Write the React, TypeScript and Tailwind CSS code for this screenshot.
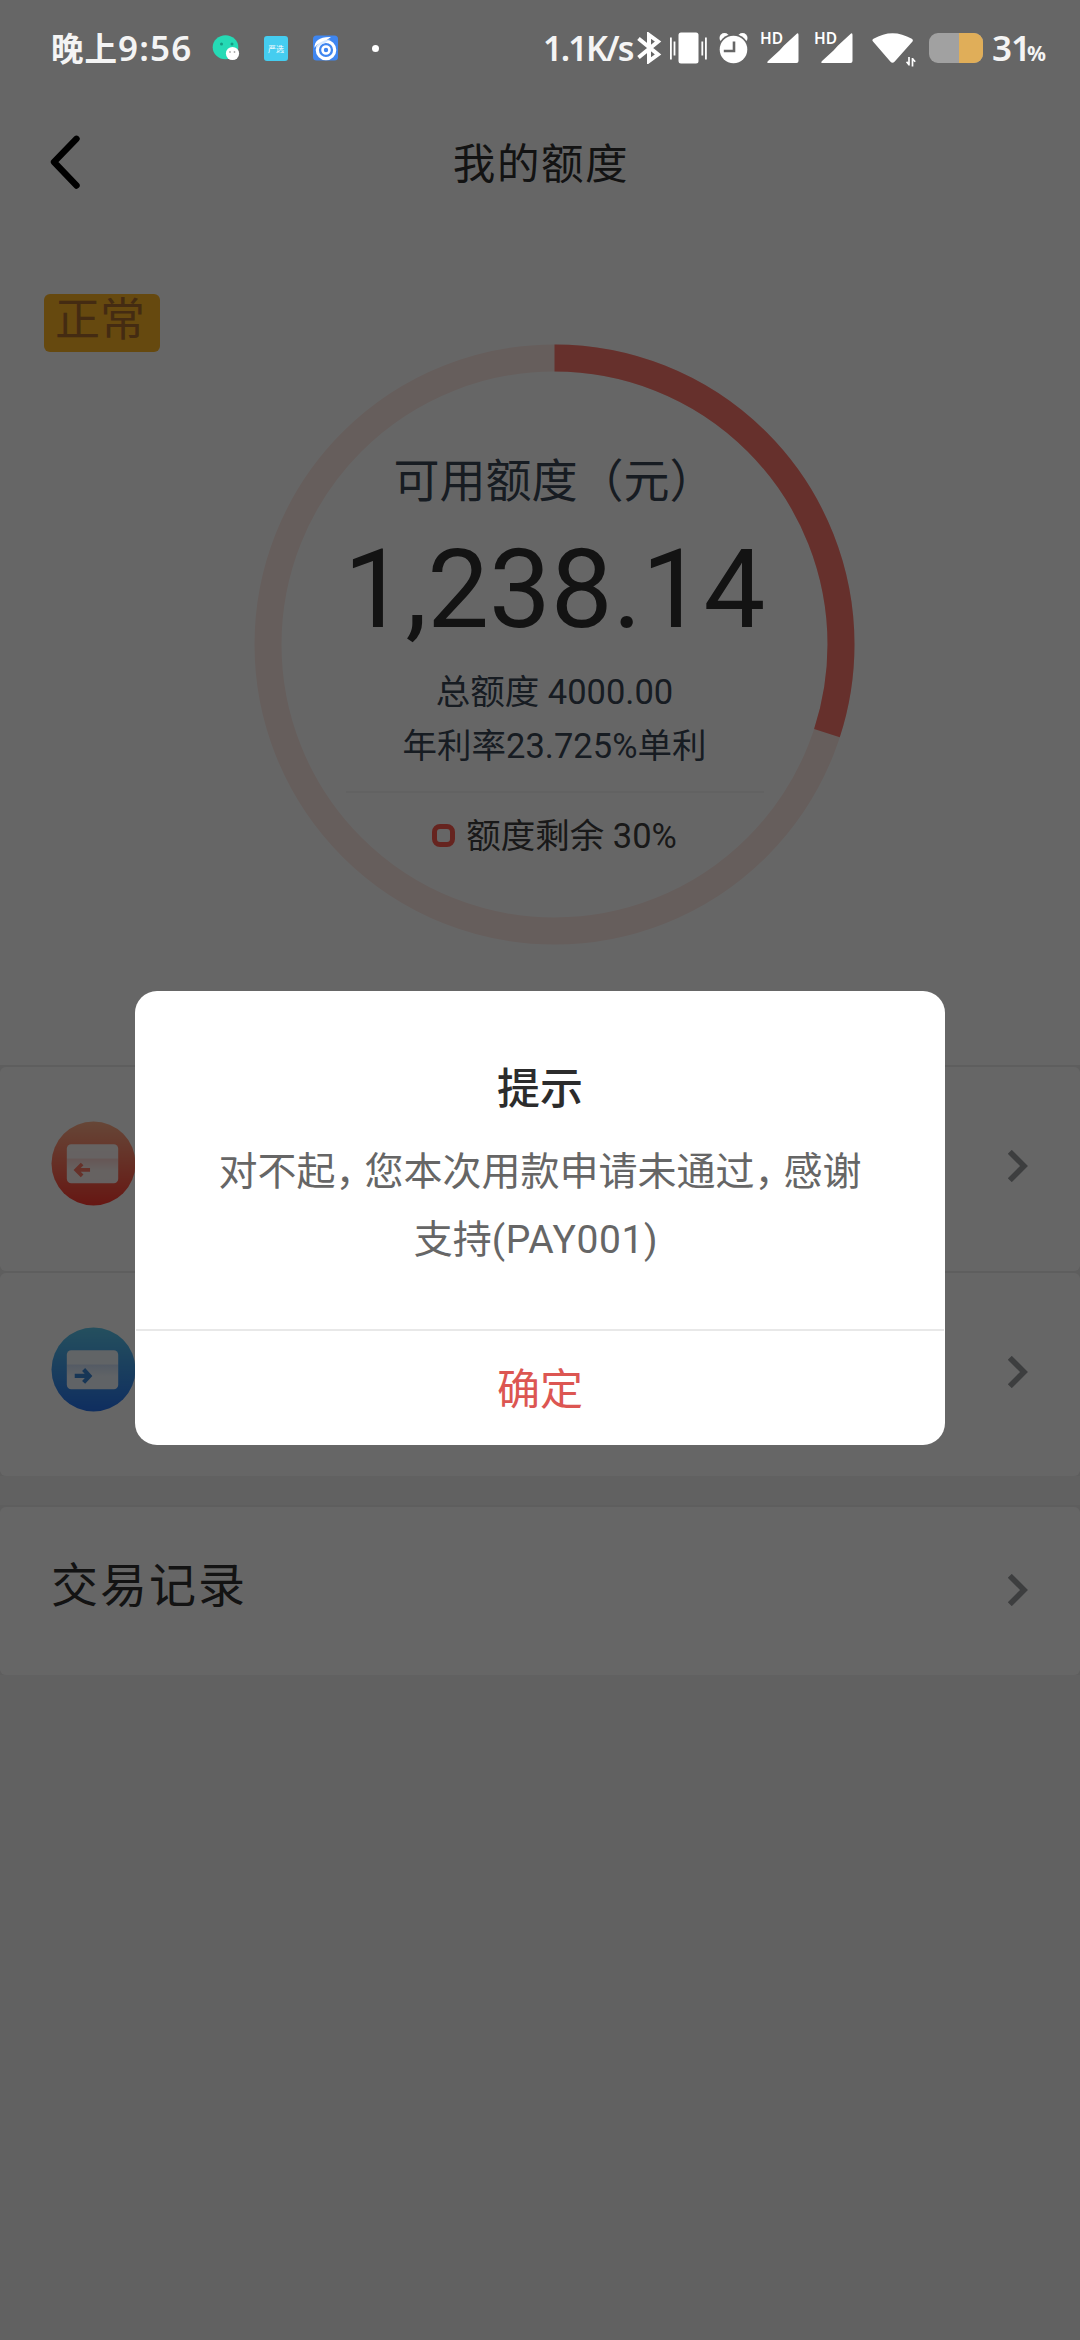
import type { ReactNode } from "react";

const RING_RADIUS = 286.5
const RING_LENGTH = 2 * Math.PI * RING_RADIUS

function SignalIcon() {
    return (
        <svg width="38" height="32" viewBox="0 0 38 32" className="shrink-0 overflow-visible">
            <text x="-1" y="11.6" fontSize="15.5" fontWeight="600" fill="#fff" fontFamily="Noto Sans, sans-serif">
                HD
            </text>
            <path d="M36 1.5 Q37.5 0.5 37.5 3 V29 Q37.5 31 35.5 31 H8 Q5 31 7 29 L18.5 18.5 L23 13.5 Z" fill="#fff" />
        </svg>
    )
}

function StatusBar() {
    return (
        <div className="absolute inset-x-0 top-0 z-20 h-24 flex items-center pl-[51px] text-[#f4f4f4]">
            {/* Left: time and notification icons */}
            <div className="w-[161px] flex items-baseline whitespace-nowrap font-['Noto_Sans','Noto_Sans_CJK_SC',sans-serif] font-semibold leading-none">
                <span className="text-[32.5px] tracking-[1px]">晚上</span>
                <span className="text-[35px] tracking-[1.2px]">9:56</span>
            </div>
            <svg width="28" height="26" viewBox="0 0 28 26" className="shrink-0">
                <ellipse cx="13.5" cy="12.3" rx="12.8" ry="12" fill="#25dab5" />
                <circle cx="9.5" cy="9" r="1.5" fill="#159c84" />
                <circle cx="20" cy="9" r="1.5" fill="#159c84" />
                <circle cx="20.5" cy="18.5" r="6.6" fill="#fff" />
                <circle cx="18" cy="17" r="0.9" fill="#aaa" />
                <circle cx="22.5" cy="17" r="0.9" fill="#aaa" />
            </svg>
            <div className="ml-6 w-6 h-[25px] rounded-[3px] bg-[#45cdf0] text-white text-[8px] leading-[25px] text-center whitespace-nowrap font-['Noto_Sans_CJK_SC',sans-serif]">
                严选
            </div>
            <svg width="25" height="26" viewBox="0 0 25 26" className="ml-[25px] shrink-0">
                <rect width="25" height="25" y="0.5" rx="3.5" fill="#3f86f0" />
                <circle cx="13" cy="15" r="8.7" fill="none" stroke="#fff" strokeWidth="3.2" />
                <circle cx="13" cy="15" r="3.5" fill="none" stroke="#fff" strokeWidth="2.6" />
                <path d="M1.5 13 C1 6 7 1.5 18 2 L13 5.5 C8 6 4 9 1.5 13 Z" fill="#fff" />
                <path d="M3 14 C4 8 10 5 17 4.5 L12 8 C8 9 5 11 3 14 Z" fill="#d4e8ff" />
            </svg>
            <div className="ml-[34px] w-[7px] h-[7px] rounded-full bg-white" />

            {/* Right: system indicators */}
            <div className="ml-[164px] w-[94px] shrink-0 whitespace-nowrap text-[34px] leading-none tracking-[-1.8px] font-semibold font-['Noto_Sans',sans-serif]">
                1.1K/s
            </div>
            <svg width="25" height="32" viewBox="0 0 25 32" className="shrink-0 -mt-px" fill="none" stroke="#fff" strokeWidth="4">
                <path d="M1.5 6.5 L21 22.5 L12 29 V3 L21 9.5 L1.5 25.5" />
            </svg>
            <svg width="37" height="32" viewBox="0 0 37 32" className="ml-2 shrink-0" fill="#fff">
                <rect x="8.5" y="0.5" width="20" height="31" rx="2.5" />
                <rect x="0" y="5.5" width="1.8" height="22" />
                <rect x="3.6" y="9.5" width="1.8" height="14" />
                <rect x="31.4" y="9.5" width="1.8" height="14" />
                <rect x="35" y="5.5" width="1.8" height="22" />
            </svg>
            <svg width="29" height="32" viewBox="0 0 29 32" className="ml-3 shrink-0">
                <circle cx="5.5" cy="6" r="5" fill="#fff" />
                <circle cx="23.5" cy="6" r="5" fill="#fff" />
                <circle cx="14.5" cy="17.5" r="15.4" fill="#666" />
                <circle cx="14.5" cy="17.5" r="13.8" fill="#fff" />
                <path d="M15 9.5 V19 H4.8" fill="none" stroke="#666" strokeWidth="2.6" />
            </svg>
            <div className="ml-[13px] flex gap-4">
                <SignalIcon />
                <SignalIcon />
            </div>
            <svg width="45" height="36" viewBox="0 0 45 36" className="ml-[19px] mt-[3px] shrink-0" fill="#fff">
                <path d="M1 9.5 Q-0.5 8 1.5 6.8 Q20.5 -4.5 39.8 6.8 Q41.5 8 40.5 9.5 L22.5 29.8 Q20.5 31.8 18.5 29.8 Z" />
                <path d="M37 25 V33.5 M37.2 33 L34.6 29.8 M40.5 34.5 V26 M40.3 26.5 L43.2 29.8" fill="none" stroke="#fff" strokeWidth="1.7" />
            </svg>
            <div className="ml-[12px] w-[54px] h-[30px] shrink-0 rounded-[9px] overflow-hidden flex bg-[#a1a1a1]">
                <div className="ml-auto w-6 h-full bg-[#e0ae59]" />
            </div>
            <div className="ml-[9px] -mt-px flex items-baseline leading-none font-semibold font-['Noto_Sans',sans-serif]">
                <span className="w-[35px] text-[35px] tracking-[-1px]">31</span>
                <span className="text-[21px] font-bold">%</span>
            </div>
        </div>
    )
}

function RightArrow() {
    return (
        <svg width="20" height="32" viewBox="0 0 20 32" fill="none" stroke="#989b9f" strokeWidth="5.6">
            <path d="M1.8 1.8 L16 16 L1.8 30.2" />
        </svg>
    )
}

function CardIcon({ id, from, to, children }: { id: string; from: string; to: string; children: ReactNode }) {
    return (
        <svg width="85" height="85" viewBox="0 0 86 86" className="mb-[5px]">
            <defs>
                <linearGradient id={id} x1="0" y1="0" x2="0" y2="1">
                    <stop offset="0" stopColor={from} />
                    <stop offset="1" stopColor={to} />
                </linearGradient>
                <linearGradient id={`${id}-stripe`} x1="0" y1="0" x2="0" y2="1">
                    <stop offset="0" stopColor={to} stopOpacity="0.16" />
                    <stop offset="1" stopColor={to} stopOpacity="0" />
                </linearGradient>
            </defs>
            <circle cx="43" cy="43" r="42.5" fill={`url(#${id})`} />
            <rect x="16" y="23.5" width="52" height="39.5" rx="4.5" fill="#fff" fillOpacity="0.93" />
            <rect x="16" y="38" width="52" height="12" fill={`url(#${id}-stripe)`} />
            {children}
        </svg>
    )
}

export default function App() {
    return (
        <div className="relative w-[1080px] h-[2340px] overflow-hidden bg-[#f2f2f2] font-['Roboto','Noto_Sans_CJK_SC',sans-serif]">
            <StatusBar />

            <div className="h-[1065px] bg-white pt-24">
                {/* Header */}
                <div className="h-[132px] grid grid-cols-3 items-center px-[50px]">
                    <svg width="30" height="54" viewBox="0 0 30 54" fill="none" stroke="#000" strokeWidth="6.4" strokeLinecap="round" strokeLinejoin="round">
                        <path d="M26.5 3.8 L4 27 L26.5 50.5" />
                    </svg>
                    <h1 className="pt-[6px] pl-[2px] text-center text-[42.5px] tracking-[1.6px] leading-none text-[#303030]">我的额度</h1>
                </div>

                {/* Quota */}
                <div className="flex pt-[66px] pl-11">
                    <div className="w-[116px] h-[58px] rounded-[6px] bg-[#ffb626] text-[#ab6d2d] text-[45px] leading-[54px] text-center pr-1">
                        正常
                    </div>
                    <div className="relative w-[601px] h-[601px] mt-[50px] ml-[94px]">
                        <svg width="601" height="601" viewBox="0 0 601 601" fill="none" strokeWidth="27" className="absolute inset-0">
                            <circle cx="300.5" cy="300.5" r={RING_RADIUS} stroke="#ffebe6" />
                            <circle
                                cx="300.5"
                                cy="300.5"
                                r={RING_RADIUS}
                                stroke="#ff786f"
                                strokeDasharray={`${RING_LENGTH * 0.3} ${RING_LENGTH}`}
                                transform="rotate(-90 300.5 300.5)"
                            />
                        </svg>
                        <div className="relative flex flex-col items-center pt-[109px] text-[#3a4655] whitespace-nowrap">
                            <p className="text-[46px] leading-[56px]">可用额度（元）</p>
                            <p className="mt-[21px] text-[110px] leading-[120px] text-[#303030]">1,238.14</p>
                            <p className="mt-[15px] text-[34.5px] leading-[54px]">总额度 4000.00</p>
                            <p className="text-[34.5px] leading-[54px]">年利率23.725%单利</p>
                            <div className="mt-[18px] w-[418px] h-[2px] bg-[#f5f5f5]" />
                            <div className="mt-[16px] flex items-center text-[34.5px] leading-[54px] text-[#404040]">
                                <span className="w-[23px] h-[23px] mr-[11px] -mt-[2px] rounded-[8px] border-[5.5px] border-[#ff5a4e]" />
                                <span>额度剩余 30%</span>
                            </div>
                        </div>
                    </div>
                </div>
            </div>

            {/* Entries */}
            <div className="bg-[#ebebeb] pt-[2px]">
                <div className="h-[204px] rounded-[6px] bg-white flex items-center justify-between pl-[51px] pr-[52px] pb-[6px]">
                    <CardIcon id="draw" from="#ffb08a" to="#ff3a30">
                        <path d="M25 49.5 H39.5 M31.5 43.5 L25.5 49.5 L31.5 55.5" fill="none" stroke="#ff7a68" strokeWidth="3.8" />
                    </CardIcon>
                    <RightArrow />
                </div>
                <div className="mt-[2px] h-[203px] rounded-[6px] bg-white flex items-center justify-between pl-[51px] pr-[52px] pb-[6px]">
                    <CardIcon id="repay" from="#5cc6ea" to="#2672ee">
                        <path d="M24 49.5 H39 M33 43 L39 49.5 L33 56" fill="none" stroke="#3a88d8" strokeWidth="4.2" />
                    </CardIcon>
                    <RightArrow />
                </div>
            </div>
            <div className="h-[29px] bg-[#f2f2f2]" />
            <div className="bg-[#ebebeb] pt-[2px]">
                <div className="h-[168px] rounded-[6px] bg-white flex items-center justify-between pl-[51px] pr-[52px] pb-[2px]">
                    <span className="text-[47px] leading-none tracking-[2px] text-[#303030] pb-[9px]">交易记录</span>
                    <RightArrow />
                </div>
            </div>

            {/* Dialog */}
            <div className="absolute inset-0 z-10 bg-black/60 flex items-center justify-center pt-24">
                <div className="w-[810px] h-[454px] rounded-[22px] bg-white flex flex-col text-center font-['Noto_Sans_CJK_SC',sans-serif]">
                    <div className="grow pt-[63px]">
                        <h2 className="text-[43px] leading-[62px] font-medium text-[#2c2c2c]">提示</h2>
                        <p className="mt-[18px] text-[39px] leading-[68px] text-[#666]">
                            对不起<span className="tracking-[-10px]">，</span>您本次用款申请未通过<span className="tracking-[-10px]">，</span>感谢
                            <br />
                            <span className="mr-2">支持<span className="font-['Roboto',sans-serif] tracking-[0.6px]">(PAY001)</span></span>
                        </p>
                    </div>
                    <button className="h-[116px] mx-px pb-[3px] border-t-2 border-[#e8e8e8] text-[43px] text-[#dc5652]">确定</button>
                </div>
            </div>
        </div>
    );
}
